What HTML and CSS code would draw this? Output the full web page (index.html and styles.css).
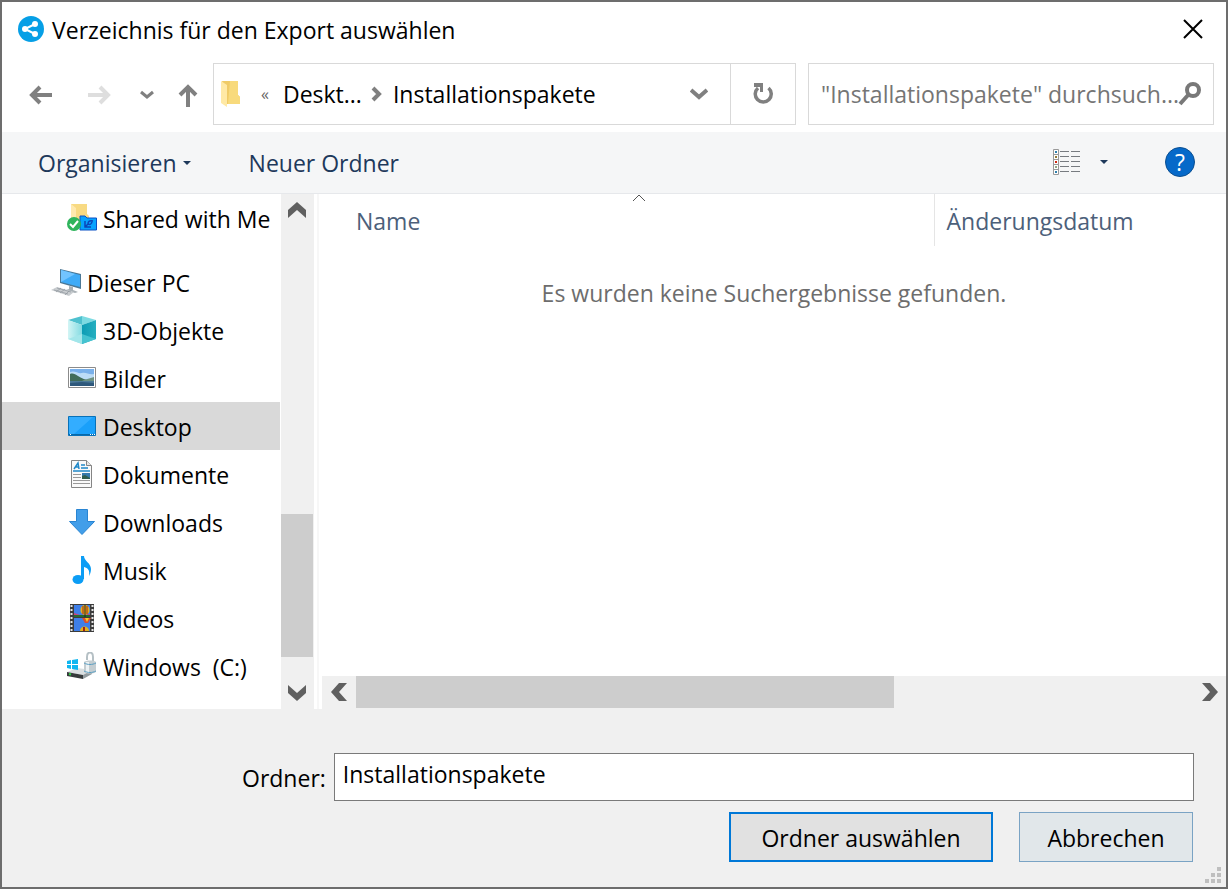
FILE: index.html
```html
<!DOCTYPE html>
<html lang="de">
<head>
  <meta charset="utf-8">
  <title>Verzeichnis für den Export auswählen</title>
  <link rel="stylesheet" href="styles.css">
</head>
<body>
  <div class="dialog">
    <header class="titlebar">
      <svg class="app-icon" width="26" height="26" viewBox="0 0 26 26">
        <circle cx="13" cy="13" r="13" fill="#069fe6"/>
        <path d="M17 8L7 13l10 5" fill="none" stroke="#fff" stroke-width="2"/>
        <circle cx="17" cy="8" r="3" fill="#fff"/>
        <circle cx="7" cy="13" r="3" fill="#fff"/>
        <circle cx="17" cy="18" r="3" fill="#fff"/>
      </svg>
      <h1>Verzeichnis für den Export auswählen</h1>
      <button class="close" aria-label="Schließen">
        <svg width="20" height="20" viewBox="0 0 20 20"><path d="M1 1l18 18M19 1L1 19" fill="none" stroke="#000" stroke-width="2"/></svg>
      </button>
    </header>

    <nav class="navbar">
      <button class="nav-wide" aria-label="Zurück">
        <svg width="24" height="20" viewBox="0 0 24 20"><path d="M11 2L3 10l8 8M3 10h20" fill="none" stroke="#808080" stroke-width="4"/></svg>
      </button>
      <button class="nav-wide" aria-label="Vorwärts" disabled>
        <svg width="24" height="20" viewBox="0 0 24 20"><path d="M13 2l8 8-8 8M21 10H1" fill="none" stroke="#dedede" stroke-width="4"/></svg>
      </button>
      <button class="nav-recent" aria-label="Zuletzt besucht">
        <svg width="14" height="10" viewBox="0 0 14 10"><path d="M1 2l6 5 6-5" fill="none" stroke="#808080" stroke-width="3"/></svg>
      </button>
      <button class="nav-up" aria-label="Nach oben">
        <svg width="20" height="24" viewBox="0 0 20 24"><path d="M2 12l8-8 8 8M10 4v20" fill="none" stroke="#808080" stroke-width="4"/></svg>
      </button>
      <div class="address">
        <svg width="20" height="28" viewBox="0 0 20 28">
          <path d="M1 1h16v14l2 2v7H5z" fill="#f0cb66"/>
          <path d="M9 1h8v14l2 2v7H7z" fill="#f8da7c"/>
          <path d="M0 1l6 4v22l-6-4z" fill="#ffe9a5"/>
        </svg>
        <span class="more">«</span>
        <a href="#">Deskt...</a>
        <svg class="crumb-sep" width="12" height="16" viewBox="0 0 12 16"><path d="M2 2l6 6-6 6" fill="none" stroke="#808080" stroke-width="4"/></svg>
        <a href="#">Installationspakete</a>
        <button class="history" aria-label="Vorherige Orte">
          <svg width="18" height="14" viewBox="0 0 18 14"><path d="M1 3l8 7 8-7" fill="none" stroke="#808080" stroke-width="4"/></svg>
        </button>
        <button class="refresh" aria-label="Aktualisieren">
          <svg width="22" height="24" viewBox="0 0 22 24">
            <path d="M16.500 6A8 8 0 1 1 6 6" fill="none" stroke="#808080" stroke-width="3.500"/>
            <path d="M2 1h9v9H8V5H2z" fill="#808080"/>
          </svg>
        </button>
      </div>
      <div class="search">
        <input type="text" aria-label="Suchen" placeholder="&quot;Installationspakete&quot; durchsuch...">
        <svg width="24" height="24" viewBox="0 0 24 24"><circle cx="15" cy="8" r="6" fill="none" stroke="#787878" stroke-width="4"/><path d="M11 12L2 22" stroke="#787878" stroke-width="4"/></svg>
      </div>
    </nav>

    <div class="toolbar">
      <button class="organize">Organisieren <span class="caret"></span></button>
      <button>Neuer Ordner</button>
      <button class="view" aria-label="Ansicht ändern">
        <svg width="28" height="26" viewBox="0 0 28 26">
          <path d="M.5.5h5v25h-5zM.5 5.500h5M.5 10.500h5M.5 15.500h5M.5 20.500h5" fill="#fff" stroke="#999"/>
          <path d="M7 2.500h9M18 2.500h9M7 7.500h9M18 7.500h9M7 12.500h9M18 12.500h9M7 17.500h9M18 17.500h9M7 22.500h9M18 22.500h9" stroke="#777b80"/>
          <path d="M2 2h2v2H2zM2 22h2v2H2z" fill="#2f80ad"/>
          <path d="M2 7h2v2H2z" fill="#937a35"/>
          <path d="M2 12h2v2H2z" fill="#d02a12"/>
          <path d="M2 17h2v2H2z" fill="#8fa886"/>
        </svg>
        <span class="caret"></span>
      </button>
      <button class="help" aria-label="Hilfe">?</button>
    </div>

    <main class="content">
      <ul class="tree">
        <li class="last-of-group"><a href="#">
          <svg width="30" height="28" viewBox="0 0 30 28">
            <path d="M4 0h16v10l2 2v12H4z" fill="#f8da83"/>
            <path d="M4 0l5 4v20H4z" fill="#ffe9ae"/>
            <path d="M13 12h5l2 2h9.500v12H13z" fill="#06a3ff" stroke="#0b50c4"/>
            <path d="M18 17v6h6M18 23l3-3M26 17c-4-1-5 1-5 3 2 1 4 0 4-3" fill="none" stroke="#0b46b8" stroke-width="1.500"/>
            <circle cx="7" cy="20" r="7" fill="#2fb45c"/>
            <path d="M3 20l3 3 5-6" fill="none" stroke="#fff" stroke-width="2"/>
          </svg>
          Shared with Me</a></li>
        <li class="root"><a href="#">
          <svg width="30" height="28" viewBox="0 0 30 28">
            <path d="M9 1l21 5v15L9 15z" fill="#4b7896"/>
            <path d="M10 2l19 5v12l-19-5z" fill="#3fabf7"/>
            <path d="M10 2l14 4-14 8z" fill="#72c4ff"/>
            <path d="M18 18l4 1v3l5 2-3 1-9-3 3-1z" fill="#a8b0b5"/>
            <path d="M0 22l6-3 17 5-5 4z" fill="#c9cdd0"/>
            <path d="M3 22l14 4M6 20l14 4M5 24l5-4M9 25l5-4M14 27l4-4" stroke="#8f979d" stroke-width=".7"/>
          </svg>
          Dieser PC</a></li>
        <li><a href="#">
          <svg width="28" height="28" viewBox="0 0 28 28">
            <defs>
              <linearGradient id="cube-left"><stop offset="0" stop-color="#d3f5f5"/><stop offset="1" stop-color="#83dbe2"/></linearGradient>
              <linearGradient id="cube-right"><stop offset="0" stop-color="#0c9cb4"/><stop offset="1" stop-color="#27afc0"/></linearGradient>
            </defs>
            <path d="M0 4l14-4v9z" fill="#4fc1cf"/>
            <path d="M14 0l14 4-14 5z" fill="#7cdbe2"/>
            <path d="M0 4l14 5v19L0 23z" fill="url(#cube-left)"/>
            <path d="M28 4L14 9v19l14-5z" fill="url(#cube-right)"/>
            <path d="M14 18l14 5-14 5z" fill="#45c3d0"/>
            <path d="M14 18L0 23l14 5z" fill="#a3e6ea"/>
          </svg>
          3D-Objekte</a></li>
        <li><a href="#">
          <svg width="28" height="22" viewBox="0 0 28 22">
            <path d="M.5.5h27v20H.5z" fill="#fff" stroke="#8b8b8b"/>
            <path d="M2 2h24v17H2z" fill="#79b0ea"/>
            <path d="M2 5c5-2 8 2 12 1s7 2 12 1v6H2z" fill="#bcdcf6"/>
            <path d="M2 7c3-1 5 0 8 2s8 4 13 5H2z" fill="#416c58"/>
            <path d="M16 13l10-3v4H14z" fill="#6d9282"/>
            <path d="M2 14h24v5H2z" fill="#4b7997"/>
            <path d="M2 16l12-1 12 1v3H2z" fill="#2e587b"/>
          </svg>
          Bilder</a></li>
        <li class="selected"><a href="#">
          <svg width="28" height="20" viewBox="0 0 28 20">
            <path d="M.5.5h27v19H.5z" fill="#1aa0fa" stroke="#0871b8"/>
            <path d="M1 1h24L6 18H1z" fill="#33adff"/>
            <path d="M1 18h26v1H1z" fill="#0868a8"/>
            <path d="M2 18h1v1H2zM22 18h1v1h-1zM24 18h1v1h-1zM26 18h1v1h-1z" fill="#fff"/>
          </svg>
          Desktop</a></li>
        <li><a href="#">
          <svg width="28" height="28" viewBox="0 0 28 28">
            <path d="M3.500.5h15l5 5v22h-20z" fill="#fafafa" stroke="#858585"/>
            <path d="M18.500.5v5h5" fill="#e6e6e6" stroke="#858585"/>
            <path d="M6 9l4-6 1 6M7 7h4M13 5h4M13 8h7M5 11h17" fill="none" stroke="#2088c8" stroke-width="1.500"/>
            <path d="M5 14.500h8M5 17.500h8M5 20.500h17M5 23.500h17" stroke="#999"/>
            <path d="M14 13h8v6h-8z" fill="#3679ac"/>
            <path d="M14 16l3-1 5 3v1h-8z" fill="#305d4e"/>
          </svg>
          Dokumente</a></li>
        <li><a href="#">
          <svg width="28" height="28" viewBox="0 0 28 28"><path d="M8.500 1.500h11v12h7L14 26.500 1.500 13.500h7z" fill="#429ee9" stroke="#2985d3"/></svg>
          Downloads</a></li>
        <li><a href="#">
          <svg width="28" height="28" viewBox="0 0 28 28">
            <path d="M13 0h3c0 5 7 7 7 13 0 3-1 5-2 7 1-6-1-8-5-9v12h-3z" fill="#0c9df5"/>
            <ellipse cx="10" cy="23.500" rx="5.500" ry="4.500" fill="#0c9df5"/>
          </svg>
          Musik</a></li>
        <li><a href="#">
          <svg width="28" height="28" viewBox="0 0 28 28">
            <path d="M2 0h24v28H2z" fill="#3c3c3c"/>
            <path d="M6 1h16v12H6zM6 14h16v13H6z" fill="#3f7fe8"/>
            <path d="M6 9l6 2 10-1v3H6z" fill="#cc417b"/>
            <path d="M6 11h16v2H6z" fill="#286a2d"/>
            <path d="M3.500 1v27M24.500 1v27" stroke="#e6e6e6" stroke-width="2" stroke-dasharray="2 2"/>
            <ellipse cx="17" cy="6" rx="4.500" ry="5" fill="#e3b21c"/>
            <path d="M15 2v8M19 2v8" stroke="#a22416"/>
            <path d="M17 1v12" stroke="#222"/>
            <path d="M14 14h9l-3 5h-3z" fill="#dd4d2b"/>
            <path d="M17 14l2 4 2-4z" fill="#edcd29"/>
            <path d="M12 27c0-6 9-6 9 0z" fill="#e3b21c"/>
            <path d="M16 23v4" stroke="#a22416" stroke-width="2"/>
          </svg>
          Videos</a></li>
        <li><a href="#">
          <svg width="30" height="28" viewBox="0 0 30 28">
            <path d="M0 20l10-4 15 2-9 5z" fill="#dadfe1"/>
            <path d="M0 20l16 3v4L0 24z" fill="#363a3b"/>
            <path d="M16 23l9-5v4l-9 5z" fill="#929b9f"/>
            <path d="M2 22l2 .5" stroke="#31d245" stroke-width="2"/>
            <path d="M0 9l4-1v4H0zM5 8l6-1v5H5zM0 13h4v4l-4-1zM5 13h6v5l-6-1z" fill="#10b6f0"/>
            <path d="M20 8V5c0-6 6-6 6 0v5" fill="none" stroke="#b5c0c5" stroke-width="2"/>
            <path d="M17 10c2-2 10-2 12 0v10c-3 2-9 2-12 0z" fill="#c4cdd1"/>
            <path d="M19 10h3v11h-3z" fill="#edf2f4"/>
            <path d="M17 11c4 2 8 2 12 0M17 19c4 2 8 2 12 0" fill="none" stroke="#5b9fc3"/>
          </svg>
          Windows&nbsp; (C:)</a></li>
      </ul>

      <div class="scroll-v">
        <button class="scroll-prev" aria-label="Nach oben scrollen">
          <svg width="18" height="16" viewBox="0 0 18 16"><path d="M9 0l9 8v8L9 8l-9 8V8z" fill="#606060"/></svg>
        </button>
        <div class="thumb"></div>
        <button class="scroll-next" aria-label="Nach unten scrollen">
          <svg width="18" height="16" viewBox="0 0 18 16"><path d="M9 16l9-8V0L9 8 0 0v8z" fill="#606060"/></svg>
        </button>
      </div>

      <section class="files">
        <table>
          <thead>
            <tr>
              <th class="col-name"><button>Name</button>
                <svg class="sort" width="14" height="8" viewBox="0 0 14 8"><path d="M1 7l6-6 6 6" fill="none" stroke="#555"/></svg></th>
              <th class="col-date"><button>Änderungsdatum</button></th>
            </tr>
          </thead>
          <tbody>
            <tr><td colspan="2">Es wurden keine Suchergebnisse gefunden.</td></tr>
          </tbody>
        </table>
        <div class="scroll-h">
          <button aria-label="Nach links scrollen">
            <svg width="16" height="18" viewBox="0 0 16 18"><path d="M0 9l8-9h8L8 9l8 9H8z" fill="#606060"/></svg>
          </button>
          <div class="thumb"></div>
          <button class="scroll-end" aria-label="Nach rechts scrollen">
            <svg width="16" height="18" viewBox="0 0 16 18"><path d="M16 9L8 0H0l8 9-8 9h8z" fill="#606060"/></svg>
          </button>
        </div>
      </section>
    </main>

    <footer class="footer">
      <div class="field">
        <label for="folder">Ordner:</label>
        <input type="text" id="folder" value="Installationspakete">
      </div>
      <div class="actions">
        <button class="primary">Ordner auswählen</button>
        <button class="cancel">Abbrechen</button>
      </div>
      <svg class="grip" width="16" height="16" viewBox="0 0 16 16"><path d="M12 0h4v4h-4zM6 6h4v4H6zM12 6h4v4h-4zM0 12h4v4H0zM6 12h4v4H6zM12 12h4v4h-4z" fill="#bfbfbf"/></svg>
    </footer>
  </div>
</body>
</html>
```
FILE: styles.css
```css
:root {
  --frame: #6d6d6d;
  --line: #d9d9d9;
  --panel: #f0f0f0;
  --thumb: #cdcdcd;
  --toolbar: #f5f6f7;
  --toolbar-text: #1e395b;
  --header-text: #4c607a;
}

* {
  box-sizing: border-box;
}

body {
  margin: 0;
  font-family: "Open Sans", "Noto Sans", sans-serif;
  font-size: 23px;
  line-height: 32px;
  color: #000;
}

button, input {
  font: inherit;
  color: inherit;
  border: none;
  border-radius: 0;
  background: none;
  padding: 0;
  margin: 0;
}

button {
  display: flex;
  align-items: center;
  justify-content: center;
}

a {
  color: inherit;
  text-decoration: none;
}

svg {
  display: block;
  flex-shrink: 0;
}

.dialog {
  display: flex;
  flex-direction: column;
  min-height: 100vh;
  border: 2px solid var(--frame);
  background: #fff;
}

/* title */
.titlebar {
  display: flex;
  align-items: center;
  gap: 8px;
  height: 56px;
  padding: 0 8px 0 16px;
}

.titlebar h1 {
  flex: 1;
  margin: 0;
  font-size: 23px;
  font-weight: normal;
}

.titlebar svg {
  margin-bottom: 2px;
}

.close {
  width: 50px;
  height: 50px;
}

/* navigation row */
.navbar {
  display: flex;
  align-items: stretch;
  height: 74px;
  padding: 5px 12px 7px 10px;
}

.navbar > button {
  padding-top: 2px;
}

.nav-wide {
  width: 58px;
}

.nav-recent {
  width: 38px;
}

.nav-up {
  width: 44px;
}

.address {
  display: flex;
  align-items: center;
  flex: 1;
  margin: 0 12px 0 3px;
  padding-left: 7px;
  border: 1px solid var(--line);
}

.more {
  margin: 0 14px 0 20px;
  font-size: 16px;
  color: #666;
}

.crumb-sep {
  margin: 0 10px 0 9px;
}

.history {
  width: 62px;
  height: 100%;
  margin-left: auto;
}

.refresh {
  width: 65px;
  height: 100%;
  border-left: 1px solid var(--line);
}

.search {
  display: flex;
  align-items: center;
  width: 406px;
  border: 1px solid var(--line);
  padding: 0 11px 0 12px;
}

.search input {
  flex: 1;
  min-width: 0;
  height: 100%;
}

.search input::placeholder {
  color: #757575;
  opacity: 1;
}

/* toolbar */
.toolbar {
  display: flex;
  align-items: center;
  height: 62px;
  padding: 0 31px 0 36px;
  background: var(--toolbar);
  border-bottom: 1px solid #e6e8eb;
  color: var(--toolbar-text);
}

.caret {
  border: 4px solid transparent;
  border-top-color: var(--toolbar-text);
  border-bottom: none;
}

.organize {
  gap: 6px;
  margin-right: 58px;
}

.view {
  gap: 19px;
  margin-left: auto;
}

.toolbar .view,
.toolbar .help {
  margin-bottom: 2px;
}

.help {
  width: 30px;
  height: 30px;
  margin-left: 57px;
  border: 1px solid #0b4f91;
  border-radius: 50%;
  background: #0669c9;
  color: #fff;
}

/* folder tree */
.content {
  display: flex;
  flex: 1;
}

.tree {
  width: 279px;
  margin: 0;
  padding: 0 1px 19px 0;
  list-style: none;
}

.tree a {
  display: flex;
  align-items: center;
  height: 48px;
  padding: 2px 0 0 65px;
  white-space: nowrap;
}

.tree svg {
  width: 30px;
  margin: 0 6px 2px 0;
}

.tree svg[width="28"] {
  margin: 0 7px 2px 0;
  width: 28px;
  box-sizing: content-box;
  padding-left: 1px;
}

.tree .root a {
  padding-left: 49px;
}

.last-of-group {
  margin-bottom: 16px;
}

.selected {
  background: #d9d9d9;
}

/* scrollbars */
.scroll-v {
  display: grid;
  grid-template-rows: 32px 288fr 143fr 20fr 32px;
  width: 33px;
  padding-right: 1px;
  background: var(--panel);
}

.scroll-v .thumb {
  grid-row: 3;
}

.scroll-next {
  grid-row: 5;
}

.scroll-h {
  display: grid;
  grid-template-columns: 34px 538fr 300fr 32px;
  height: 33px;
  padding-bottom: 1px;
  margin-top: auto;
  background: var(--panel);
}

.scroll-end {
  grid-column: 4;
}

.thumb {
  background: var(--thumb);
}

/* file list */
.files {
  display: flex;
  flex-direction: column;
  flex: 1;
  margin-left: 3px;
  border-left: 2px solid #f7f7f7;
  padding-left: 3px;
}

.files table {
  width: 100%;
  border-collapse: collapse;
  table-layout: fixed;
}

.files th {
  position: relative;
  height: 52px;
  padding: 2px 12px 0;
  font-weight: normal;
  color: var(--header-text);
}

.files .col-name {
  width: 612px;
  padding-left: 34px;
  border-right: 1px solid #e5e5e5;
}

.sort {
  position: absolute;
  top: 0;
  left: calc(50% + 4px);
}

.files td {
  padding: 31px 0 0;
  text-align: center;
  color: #6d6d6d;
}

/* footer */
.footer {
  position: relative;
  height: 178px;
  padding: 44px 32px 0 240px;
  background: var(--panel);
}

.field {
  display: flex;
  align-items: center;
  gap: 8px;
}

.field label {
  padding-top: 2px;
}

.field input {
  flex: 1;
  height: 48px;
  padding: 0 8px 6px;
  border: 1px solid #7a7a7a;
  background: #fff;
}

.actions {
  display: flex;
  justify-content: flex-end;
  gap: 26px;
  margin: 11px 1px 0 0;
}

.actions button {
  height: 50px;
  padding-top: 2px;
}

.primary {
  width: 264px;
  border: 2px solid #0078d7;
  background: #e1e1e1;
}

.cancel {
  width: 174px;
  border: 1px solid #7aa3c4;
  background: #e1e7ea;
}

.grip {
  position: absolute;
  right: 5px;
  bottom: 4px;
}
```
